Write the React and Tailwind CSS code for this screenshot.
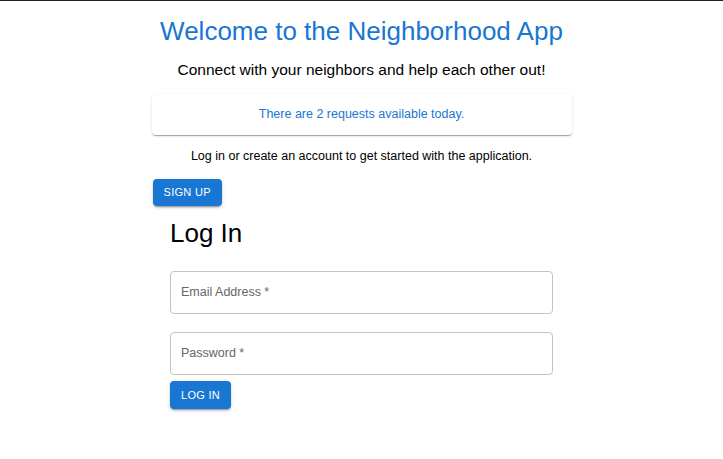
import React from 'react';

const App = () => {
    return (
        <div className="min-h-[459px] bg-white border-t border-[#222] font-['Liberation_Sans',Arial,sans-serif]">
            <div className="w-[420px] mx-auto">
                <h1 className="text-[26px] leading-[30px] text-[#1976d2] text-center mt-[15px]">
                    Welcome to the Neighborhood App
                </h1>
                <p className="text-[15.5px] leading-[20px] text-black text-center mt-[14px]">
                    Connect with your neighbors and help each other out!
                </p>
                <div className="mt-[14px] h-[41px] flex items-center justify-center rounded bg-white shadow-[0_2px_1px_-1px_rgba(0,0,0,0.2),0_1px_1px_0_rgba(0,0,0,0.14),0_1px_3px_0_rgba(0,0,0,0.12)]">
                    <span className="text-[12.5px] text-[#1976d2]">There are 2 requests available today.</span>
                </div>
                <p className="text-[12.5px] leading-[16px] text-black text-center mt-[13px]">
                    Log in or create an account to get started with the application.
                </p>
                <button className="mt-[15px] ml-[1px] h-[27px] px-[11px] rounded bg-[#1976d2] text-white text-[11px] tracking-[0.3px] uppercase shadow-[0_3px_1px_-2px_rgba(0,0,0,0.2),0_2px_2px_0_rgba(0,0,0,0.14),0_1px_5px_0_rgba(0,0,0,0.12)]">
                    Sign up
                </button>
            </div>
            <div className="w-[383px] mx-auto">
                <h2 className="text-[26px] leading-[30px] text-black mt-[12px]">Log In</h2>
                <div className="mt-[23px] h-[43px] rounded border border-[#c4c4c4] flex items-center px-[10px]">
                    <span className="text-[12.5px] text-[#666]">Email Address *</span>
                </div>
                <div className="mt-[18px] h-[43px] rounded border border-[#c4c4c4] flex items-center px-[10px]">
                    <span className="text-[12.5px] text-[#666]">Password *</span>
                </div>
                <button className="mt-[6px] h-[28px] px-[11px] rounded bg-[#1976d2] text-white text-[11px] tracking-[0.3px] uppercase shadow-[0_3px_1px_-2px_rgba(0,0,0,0.2),0_2px_2px_0_rgba(0,0,0,0.14),0_1px_5px_0_rgba(0,0,0,0.12)]">
                    Log in
                </button>
            </div>
        </div>
    );
};

export default App;
